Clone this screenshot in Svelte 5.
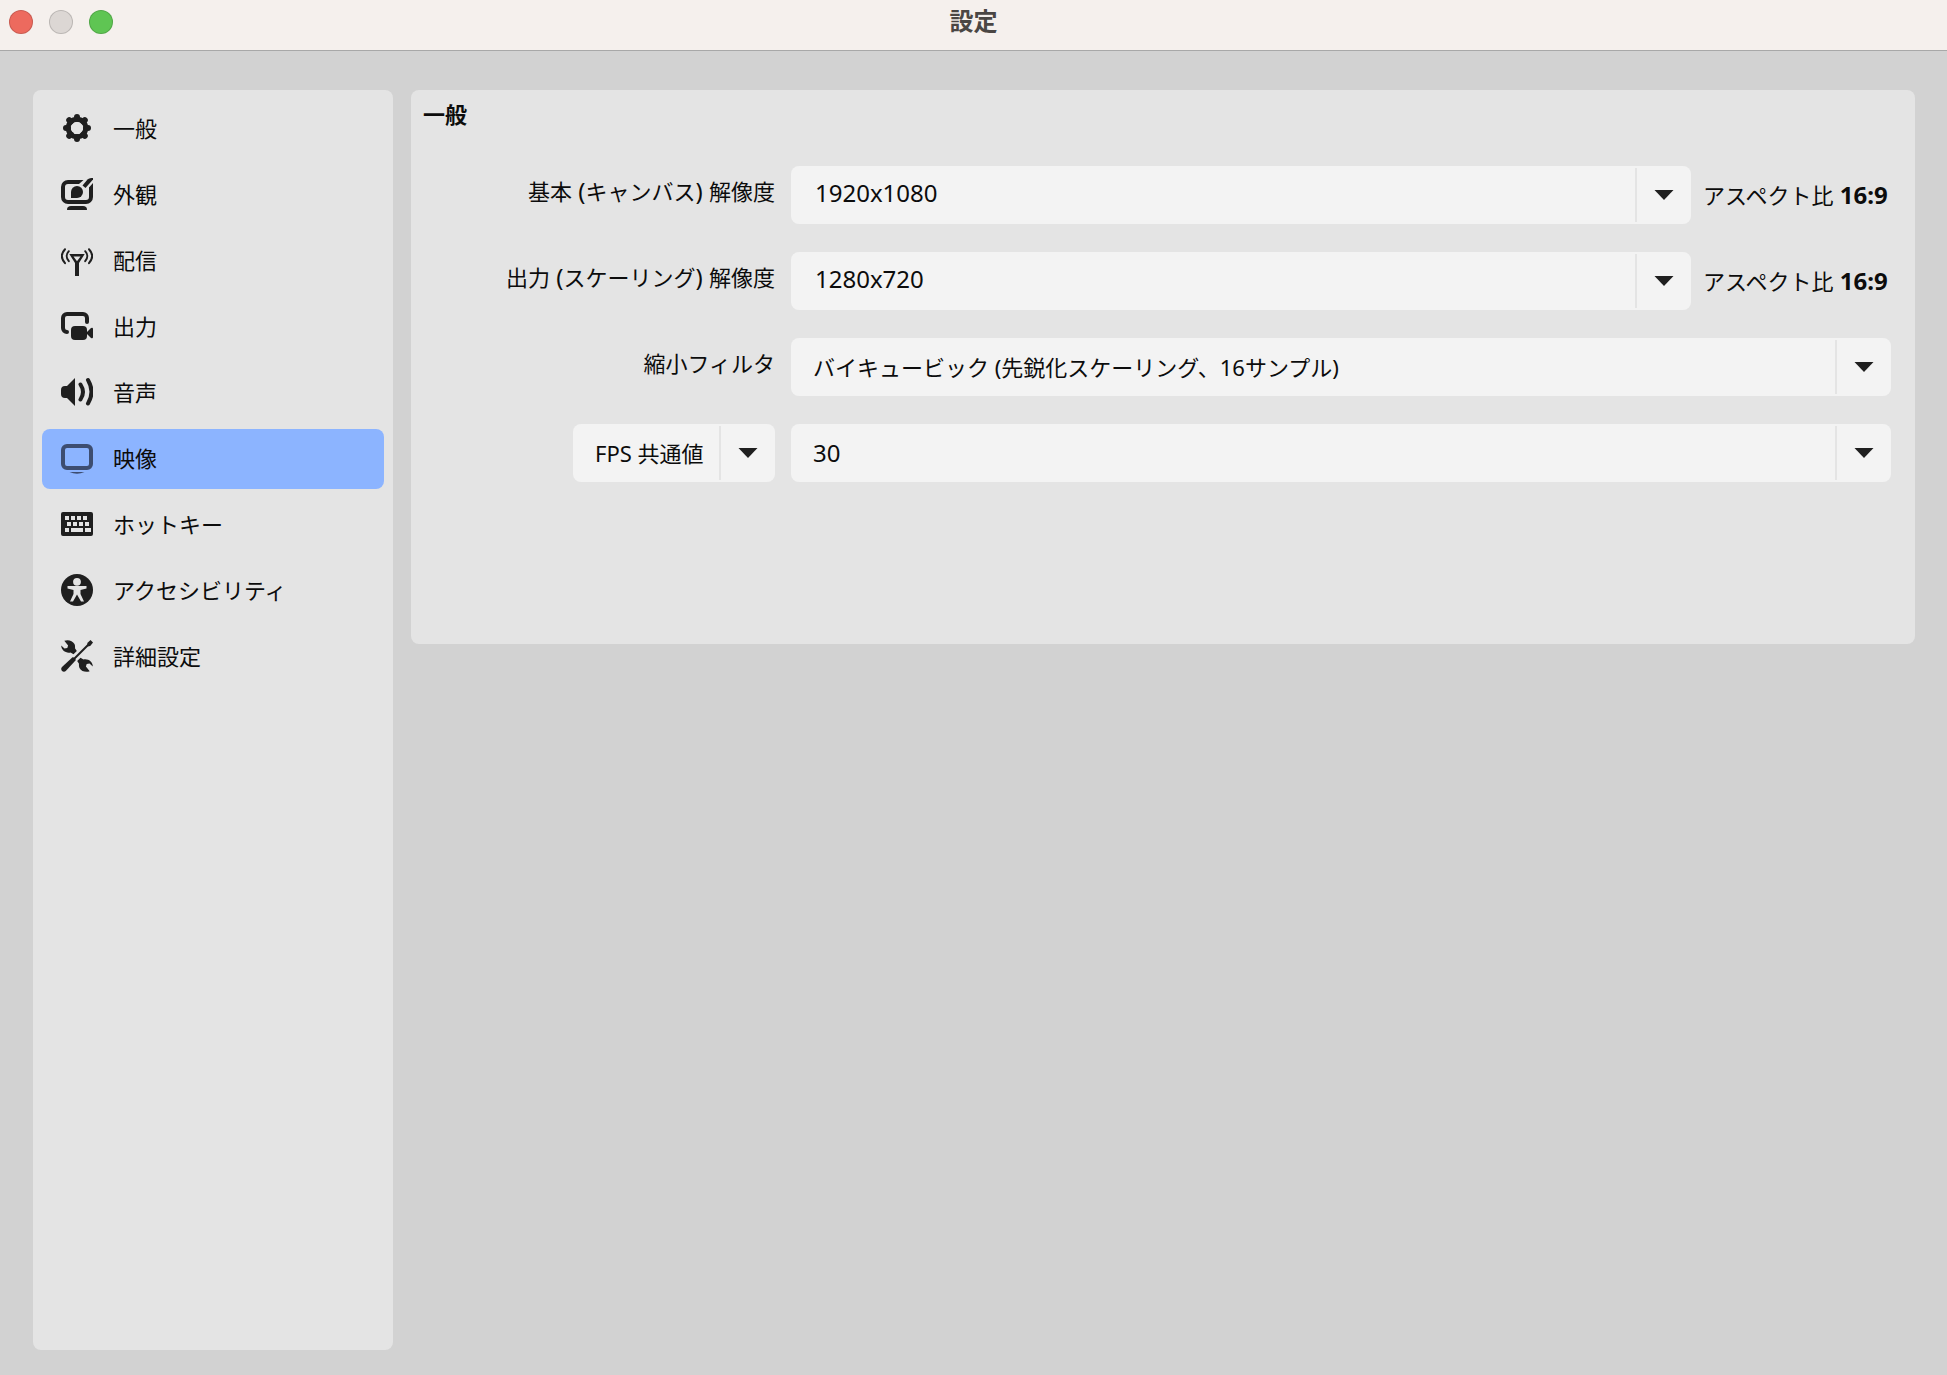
<script lang="ts">
	type Combo = { id: string; label: string; value: string; options: string[]; ratio?: string };

	const pages = [
		{ id: 'general', label: '一般' },
		{ id: 'appearance', label: '外観' },
		{ id: 'stream', label: '配信' },
		{ id: 'output', label: '出力' },
		{ id: 'audio', label: '音声' },
		{ id: 'video', label: '映像' },
		{ id: 'hotkeys', label: 'ホットキー' },
		{ id: 'accessibility', label: 'アクセシビリティ' },
		{ id: 'advanced', label: '詳細設定' }
	];

	let current = $state('video');
	let fpsType = $state('FPS 共通値');
	let fps = $state('30');

	let combos = $state<Combo[]>([
		{
			id: 'base-res',
			label: '基本 (キャンバス) 解像度',
			value: '1920x1080',
			options: ['1920x1080', '1280x720'],
			ratio: '16:9'
		},
		{
			id: 'output-res',
			label: '出力 (スケーリング) 解像度',
			value: '1280x720',
			options: ['1920x1080', '1280x720'],
			ratio: '16:9'
		},
		{
			id: 'filter',
			label: '縮小フィルタ',
			value: 'バイキュービック (先鋭化スケーリング、16サンプル)',
			options: ['バイキュービック (先鋭化スケーリング、16サンプル)']
		}
	]);

	// split so that latin runs can be set a little larger than the kana
	const runs = (s: string) => s.split(/([ -~]+)/).filter(Boolean);
	const isLatin = (s: string) => /^[ -~]/.test(s);
</script>

{#snippet arrow()}
	<span class="arrow" aria-hidden="true">
		<svg width="20" height="10" viewBox="0 0 20 10"><path d="M.5 0h19L10 10z" /></svg>
	</span>
{/snippet}

{#snippet icon(id: string)}
	<svg class="icon" viewBox="0 0 32 32" aria-hidden="true">
		{#if id === 'general'}
			<circle class="line" cx="16" cy="16" r="8.8" stroke-width="5" />
			{#each [0, 45, 90, 135, 180, 225, 270, 315] as a}
				<path class="line" d="M16 7V5" stroke-width="6" transform="rotate({a} 16 16)" />
			{/each}
		{:else if id === 'appearance'}
			<path
				class="line butt"
				d="M18 4H7a5 5 0 0 0-5 5v10a5 5 0 0 0 5 5h18a5 5 0 0 0 5-5V9.5"
				stroke-width="4"
			/>
			<path d="M18 2h4.5L18 6zM28 9.5L32 5v5h-4z" />
			<path d="M32 0v1.5L24.5 10l-3-2.500L26.500 1.500C28 .2 30 0 32 0z" />
			<path d="M10 20v-6a6 6 0 1 1 6 6z" />
			<path d="M6 32c0-3 1.500-4 4-4h12c2.500 0 4 1 4 4z" />
		{:else if id === 'stream'}
			<path fill-rule="evenodd" d="M8.300 10h15.400L18 19v13h-4V19zM12.500 12.600h7L16 17.300z" />
			<path
				class="line"
				d="M4 5.200c-4 4.300-4 9.500 0 14M7.800 7.200c-2.700 3-2.700 7 0 10M28 5.200c4 4.300 4 9.500 0 14M24.200 7.200c2.700 3 2.700 7 0 10"
				stroke-width="2"
			/>
		{:else if id === 'output'}
			<path class="line" d="M26 12V8a4 4 0 0 0-4-4H6a4 4 0 0 0-4 4v10a4 4 0 0 0 4 4" stroke-width="4" />
			<rect x="10" y="16" width="16" height="14" rx="4" />
			<path d="M25 23l5-5q2-1 2 1v8q0 2-2 1z" />
		{:else if id === 'audio'}
			<path d="M4 10h2l8-8v28l-8-8H4a4 4 0 0 1-4-4v-4a4 4 0 0 1 4-4z" />
			<path class="line" d="M19.500 8.500q5 7.500 0 15M27 4q7 12 0 23.500" stroke-width="4" />
		{:else if id === 'video'}
			<rect class="line" x="2" y="4" width="28" height="22" rx="4" stroke-width="4" />
			<path d="M8.500 30h15q-7.500 3.500-15 0z" />
		{:else if id === 'hotkeys'}
			<path
				fill-rule="evenodd"
				d="M2 4h28a2 2 0 0 1 2 2v20a2 2 0 0 1-2 2H2a2 2 0 0 1-2-2V6a2 2 0 0 1 2-2zM4 8v4h4V8zM10 8v4h4V8zM16 8v4h4V8zM22 8v4h4V8zM6 14v4h4v-4zM12 14v4h4v-4zM18 14v4h4v-4zM24 14v4h4v-4zM4 20v4h4v-4zM10 20v4h12v-4zM24 20v4h6v-4z"
			/>
		{:else if id === 'accessibility'}
			<circle cx="16" cy="16" r="16" />
			<g class="cut">
				<circle cx="16" cy="7.800" r="3.900" />
				<path d="M6.500 12h19v2.500l-6 1.500v4l3.500 7.500h-3l-4-7-4 7H9l3.500-7.500v-4l-6-1.500z" />
			</g>
		{:else}
			<!-- the same wrench head twice, turned round the centre -->
			{#each [0, 180] as a}
				<path
					transform="rotate({a} 16 16)"
					d="M3.300.7C7-.6 11.500.4 13.500 4c.7 1.600.6 3 .5 4.300l1.800 2.700-3.300 3.300-3-1.800C5 13.500.3 10.500.2 5.600l3.300 2.900L6.300 8l.8-2.600z"
				/>
			{/each}
			<path class="halo" d="M14 19L2 31" />
			<path class="line butt" d="M28 4L13 19" stroke-width="2" />
			<path d="M26.300 3L29.500 0 32 2.500 29.200 6l-2.700.5z" />
			<path d="M11.500 17.300c1-.8 3.800 1.900 3.200 3L5 30.800C2.500 33.500-1.500 30 1 27z" />
		{/if}
	</svg>
{/snippet}

<div class="window" lang="ja">
	<header class="titlebar">
		<div class="lights">
			<button type="button" class="light close" aria-label="閉じる"></button>
			<button type="button" class="light minimize" aria-label="しまう" disabled></button>
			<button type="button" class="light zoom" aria-label="拡大"></button>
		</div>
		<h1>設定</h1>
	</header>

	<div class="body">
		<nav class="sidebar">
			{#each pages as page (page.id)}
				<button
					type="button"
					class="item"
					class:selected={current === page.id}
					aria-current={current === page.id ? 'page' : undefined}
					onclick={() => (current = page.id)}
				>
					{@render icon(page.id)}
					<span>{page.label}</span>
				</button>
			{/each}
		</nav>

		<main class="panel">
			<h2>一般</h2>

			<form class="rows">
				{#each combos as combo (combo.id)}
					<label class="name" for={combo.id}>
						{#each runs(combo.label) as run}<span class:latin={isLatin(run)}>{run}</span>{/each}
					</label>
					<div class="field">
						<div class="combo" class:resolution={combo.ratio}>
							<select id={combo.id} bind:value={combo.value}>
								{#each combo.options as option}
									<option>{option}</option>
								{/each}
							</select>
							{@render arrow()}
						</div>
						{#if combo.ratio}
							<span class="ratio">アスペクト比<b class="latin">&nbsp;{combo.ratio}</b></span>
						{/if}
					</div>
				{/each}

				<div class="combo fps-type">
					<select aria-label="FPS の種類" bind:value={fpsType}>
						<option>FPS 共通値</option>
					</select>
					{@render arrow()}
				</div>
				<div class="field">
					<div class="combo number">
						<select aria-label="FPS" bind:value={fps}>
							<option>30</option>
							<option>60</option>
						</select>
						{@render arrow()}
					</div>
				</div>
			</form>
		</main>
	</div>
</div>

<style>
	:global(body) {
		background: #d2d2d2;
	}

	.window {
		display: flex;
		flex-direction: column;
		min-height: 100vh;
		font-family: 'Noto Sans', 'Noto Sans CJK JP', sans-serif;
		font-size: 22px;
		line-height: 32px;
		color: #0c0c0c;
	}

	.window,
	.window * {
		box-sizing: border-box;
	}

	button,
	select {
		font: inherit;
		color: inherit;
		border: none;
		margin: 0;
	}

	.titlebar {
		display: grid;
		grid-template-columns: 1fr auto 1fr;
		align-items: center;
		height: 51px;
		padding: 0 9px 6px;
		background: #f5f0ed;
		border-bottom: 1px solid #a8a8a8;
	}

	.lights {
		display: flex;
		gap: 16px;
	}

	.light {
		width: 24px;
		height: 24px;
		padding: 0;
		border-radius: 50%;
		border: 1px solid rgba(0, 0, 0, 0.15);
	}

	.close {
		background: #ed6a5e;
	}

	.minimize {
		background: #dcd7d4;
	}

	.zoom {
		background: #5fc553;
	}

	h1 {
		margin: 0;
		padding-bottom: 2px;
		font-size: 24px;
		font-weight: 700;
		color: #4a4644;
	}

	.body {
		flex: 1;
		display: flex;
		align-items: flex-start;
		gap: 18px;
		padding: 39px 32px 25px 33px;
	}

	.sidebar {
		align-self: stretch;
		display: flex;
		flex-direction: column;
		gap: 6px;
		width: 360px;
		padding: 9px;
		background: #e4e4e4;
		border-radius: 8px;
	}

	.item {
		display: flex;
		align-items: center;
		gap: 20px;
		height: 60px;
		padding: 0 19px 2px;
		border-radius: 8px;
		background: none;
		text-align: left;
	}

	.item.selected {
		background: #8cb4ff;
	}

	.icon {
		width: 32px;
		height: 32px;
		flex: none;
		fill: #1f1f1f;
		stroke: none;
	}

	.selected .icon {
		fill: #3d4d70;
	}

	.line {
		fill: none;
		stroke: #1f1f1f;
		stroke-linecap: round;
	}

	.line.butt {
		stroke-linecap: butt;
	}

	.selected .line {
		stroke: #3d4d70;
	}

	.cut {
		fill: #e4e4e4;
	}

	.halo {
		fill: none;
		stroke: #e4e4e4;
		stroke-width: 6;
	}

	.panel {
		flex: 1;
		padding: 8px 24px 162px 12px;
		background: #e4e4e4;
		border-radius: 8px;
	}

	h2 {
		margin: 0 0 36px;
		font-size: 22px;
		font-weight: 700;
	}

	.rows {
		display: grid;
		grid-template-columns: 352px 1fr;
		gap: 28px 16px;
	}

	.name {
		align-self: center;
		padding-bottom: 8px;
		text-align: right;
		white-space: pre;
	}

	.latin {
		font-size: 24px;
	}

	.field {
		display: flex;
		align-items: center;
		gap: 12px;
	}

	/* select and arrow share one cell */
	.combo {
		flex: 1;
		display: grid;
		grid-template-columns: 1fr 56px;
		height: 58px;
		background: #f3f3f3;
		border-radius: 8px;
	}

	.combo select {
		grid-area: 1 / 1 / 2 / 3;
		width: 100%;
		padding: 0 60px 0 22px;
		appearance: none;
		background: none;
		border-radius: 8px;
	}

	.combo.resolution select {
		padding-left: 24px;
		padding-bottom: 4px;
		font-size: 24px;
	}

	.combo.number select {
		font-size: 24px;
	}

	.fps-type {
		justify-self: end;
		width: 202px;
	}

	.arrow {
		grid-area: 1 / 2 / 2 / 3;
		display: flex;
		align-items: center;
		justify-content: center;
		margin: 2px 0;
		border-left: 2px solid #e4e4e4;
		pointer-events: none;
	}

	.arrow svg {
		fill: #1f1f1f;
	}

	.ratio {
		min-width: 188px;
		white-space: nowrap;
	}
</style>
